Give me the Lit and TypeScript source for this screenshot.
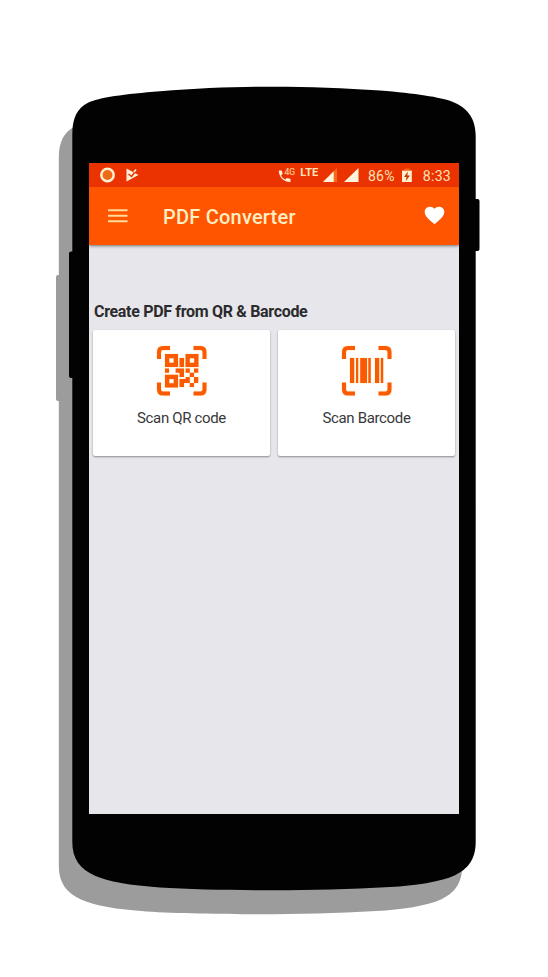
import { LitElement, html, css, svg } from "lit";
import { customElement } from "lit/decorators.js";

const BODY =
  "M72.3 134C72.3 118 77 108.500 88 102.700C98 97.500 125 94 160 91.200C200 88 240 86.700 274 86.700C308 86.700 345 88 380 90.600C415 93.500 440 97 453 102C468 108.500 475.700 118 475.700 138V842C475.700 860 467 869.500 455 875.200C440 882 415 885.500 390 887C350 889.300 310 890.200 274 890.200C238 890.200 190 889.500 160 887.500C130 885.500 108 881.500 95 875.800C80 869 72.300 859 72.300 842Z";

const BRACKETS =
  "M2 13V6Q2 2 6 2H13M36.500 2H43.500Q47.500 2 47.500 6V13M47.500 36.500V43.500Q47.500 47.500 43.500 47.500H36.500M13 47.500H6Q2 47.500 2 43.500V36.500";

const brackets = svg`
  <path d=${BRACKETS} fill="none" stroke="#fff0cc" stroke-width="5.400" />
  <path d=${BRACKETS} fill="none" stroke="#fb5a05" stroke-width="4" />`;

@customElement("app-root")
export class AppRoot extends LitElement {
  static styles = css`
    :host {
      display: block;
      position: relative;
      box-sizing: border-box;
      width: 548px;
      height: 977px;
      padding: 163px 89px;
      overflow: hidden;
      background: #fff;
      font-family: Roboto, "Liberation Sans", sans-serif;
    }
    svg { display: block; flex: none; overflow: visible; }
    .device { position: absolute; inset: 0; }
    .screen {
      position: relative;
      width: 370px;
      height: 651px;
      background: #e7e6eb;
      display: flex;
      flex-direction: column;
    }
    .status {
      position: relative;
      z-index: 1;
      height: 24px;
      background: #ea3300;
      color: #ffe3b8;
      display: flex;
      align-items: center;
      padding: 0 8px 0 10px;
      box-sizing: border-box;
      font-size: 14px;
      line-height: 24px;
      white-space: nowrap;
    }
    .play { margin-left: 9px; }
    .call { display: flex; margin-left: auto; }
    .lte {
      font-size: 11px;
      font-weight: 700;
      line-height: 12px;
      height: 17px;
      margin-left: 4px;
      letter-spacing: 0.1px;
    }
    .sig1 { margin-left: 5px; }
    .sig2 { margin-left: 7px; }
    .percent { margin-left: 8.5px; letter-spacing: 0.3px; padding-top: 1px; }
    .battery { margin-left: 7px; }
    .time { margin-left: 11px; letter-spacing: 0.3px; padding-top: 1px; }
    .bar {
      height: 57.5px;
      background: #ff5400;
      color: #ffefc2;
      display: flex;
      align-items: center;
      padding: 0 14px 0 19px;
      box-shadow: 0 1px 3px rgba(0, 0, 0, 0.5);
    }
    .title {
      margin: 2.5px auto 0 35px;
      font-size: 20px;
      font-weight: 500;
      line-height: 24px;
      letter-spacing: 0.22px;
    }
    .heading {
      margin: 57.5px 0 0 5px;
      font-size: 16px;
      font-weight: 700;
      line-height: 20px;
      letter-spacing: -0.32px;
      color: #2b2b2e;
      white-space: nowrap;
    }
    .cards {
      display: grid;
      grid-template-columns: 1fr 1fr;
      gap: 8px;
      padding: 8px 4px 0;
    }
    .card {
      height: 126px;
      box-sizing: border-box;
      padding-top: 16px;
      background: #fff;
      border-radius: 2px;
      box-shadow: 0 1px 2px rgba(0, 0, 0, 0.4);
      display: flex;
      flex-direction: column;
      align-items: center;
    }
    .label {
      margin-top: 12px;
      font-size: 15px;
      line-height: 20px;
      letter-spacing: -0.34px;
      color: #38383a;
    }
    .glyph {
      fill: #fb5a05;
      stroke: #fff0cc;
      stroke-width: 1.2px;
      paint-order: stroke;
    }
  `;

  private device() {
    return html`<svg class="device" width="548" height="977" viewBox="0 0 548 977">
      <g fill="#9c9c9c" transform="translate(-13.500 24)">
        <path d=${BODY} />
        <rect x="69.500" y="251" width="8" height="126" rx="2" />
      </g>
      <g fill="#020202">
        <path d=${BODY} />
        <rect x="69" y="251.500" width="8" height="126.500" rx="2" />
        <rect x="470" y="199" width="9.500" height="52" rx="2" />
      </g>
    </svg>`;
  }

  private statusBar() {
    return html`<div class="status">
      <svg width="17" height="16" viewBox="0 0 17 16">
        <circle cx="8.500" cy="8" r="6.200" fill="#ee6a18" stroke="#fff0d0" stroke-width="2.500" />
      </svg>
      <svg class="play" width="15" height="16" viewBox="0 0 15 16">
        <path d="M1.500 1.500L13.500 8L1.500 14.500Z" fill="#fff0d8" />
        <path d="M3.500 7L6.500 9.500L12 2.500" fill="none" stroke="#ea3300" stroke-width="1.500" />
        <path d="M9 5L11 2.500" stroke="#fff0d8" stroke-width="1.600" />
      </svg>
      <span class="call">
        <svg width="17" height="18" viewBox="0 0 17 18">
          <path d="M-.2 4.500h3l.8 3.400-1.600 1.500c1 2 2.500 3.200 4.300 4.100l1.500-1.500 3.700.7v3.200C5 16.300-.2 11.300-.2 4.500Z" fill="#fff0d8" />
          <text x="5.500" y="9" font-size="8.500" fill="#ffc690" stroke="#ffc690" stroke-width=".2">4G</text>
        </svg>
      </span>
      <span class="lte">LTE</span>
      <svg class="sig1" width="14" height="16" viewBox="0 0 14 16">
        <path d="M0 15L14 1V15Z" fill="#f56a1d" />
        <path d="M0 15L10.700 4.300V15Z" fill="#fff5dc" />
      </svg>
      <svg class="sig2" width="15" height="16" viewBox="0 0 15 16">
        <path d="M0 15L14.500 1V15Z" fill="#fff5dc" />
      </svg>
      <span class="percent">86%</span>
      <svg class="battery" width="10" height="15" viewBox="0 0 10 15">
        <path d="M2.500 .5H7.500V2H10V5H0V2H2.500Z" fill="#f5671c" />
        <rect y="2.800" width="9.800" height="11.200" fill="#fff0d0" />
        <path d="M5.800 3.500L2 9H4.500L3.800 13L8 7.500H5.400Z" fill="#c83a08" />
      </svg>
      <span class="time">8:33</span>
    </div>`;
  }

  private toolbar() {
    return html`<div class="bar">
      <svg width="20" height="16" viewBox="0 0 20 16">
        <path d="M0 2.200H19.500M0 7.700H19.500M0 13.200H19.500" stroke="#ffdc98" stroke-width="1.900" />
      </svg>
      <div class="title">PDF Converter</div>
      <svg width="21" height="19" viewBox="0 0 22 20">
        <path d="M11 19.300L9.500 18C4.200 13.200.7 10.100.7 6.200.7 3.100 3.200.8 6.200.8 8.100.8 9.900 1.700 11 3 12.100 1.700 13.900.8 15.800.8 18.800.8 21.300 3.100 21.300 6.200 21.300 10.100 17.800 13.200 12.500 18Z" fill="#fff" />
      </svg>
    </div>`;
  }

  private qrIcon() {
    return html`<svg width="50" height="50" viewBox="0 0 50 50">
      ${brackets}
      <path class="glyph" fill-rule="evenodd" d="M8 8H21V21H8ZM12.300 12.300V16.700H16.700V12.300Z
        M28.500 8H41.500V21H28.500ZM32.800 12.300V16.700H37.200V12.300Z
        M8 28.700H21V41.500H8ZM12.300 33V37.300H16.700V33Z
        M22.500 12H27V21H22.500Z
        M8 22.600H12V26.700H8Z
        M18.700 22.600H27V31H22.500V26.700H18.700Z
        M28.700 22.600H32.800V26.700H28.700ZM37 22.600H41.200V26.700H37ZM32.800 26.700H37V31H32.800Z
        M22.500 33H28.700V31H32.800V37H27V41H22.500ZM37 31H41.200V37H37ZM32.800 37H37V41H32.800Z" />
    </svg>`;
  }

  private barcodeIcon() {
    return html`<svg width="50" height="50" viewBox="0 0 50 50">
      ${brackets}
      <path class="glyph" d="M8 12H12.200V37H8ZM14 12H16.200V37H14ZM18.200 12H25V37H18.200ZM26.300 12H28.800V37H26.300ZM33 12H37.200V37H33ZM38.800 12H41.200V37H38.800Z" />
    </svg>`;
  }

  render() {
    return html`
      ${this.device()}
      <div class="screen">
        ${this.statusBar()} ${this.toolbar()}
        <div class="heading">Create PDF from QR &amp; Barcode</div>
        <div class="cards">
          <div class="card">${this.qrIcon()}<div class="label">Scan QR code</div></div>
          <div class="card">${this.barcodeIcon()}<div class="label">Scan Barcode</div></div>
        </div>
      </div>
    `;
  }
}
